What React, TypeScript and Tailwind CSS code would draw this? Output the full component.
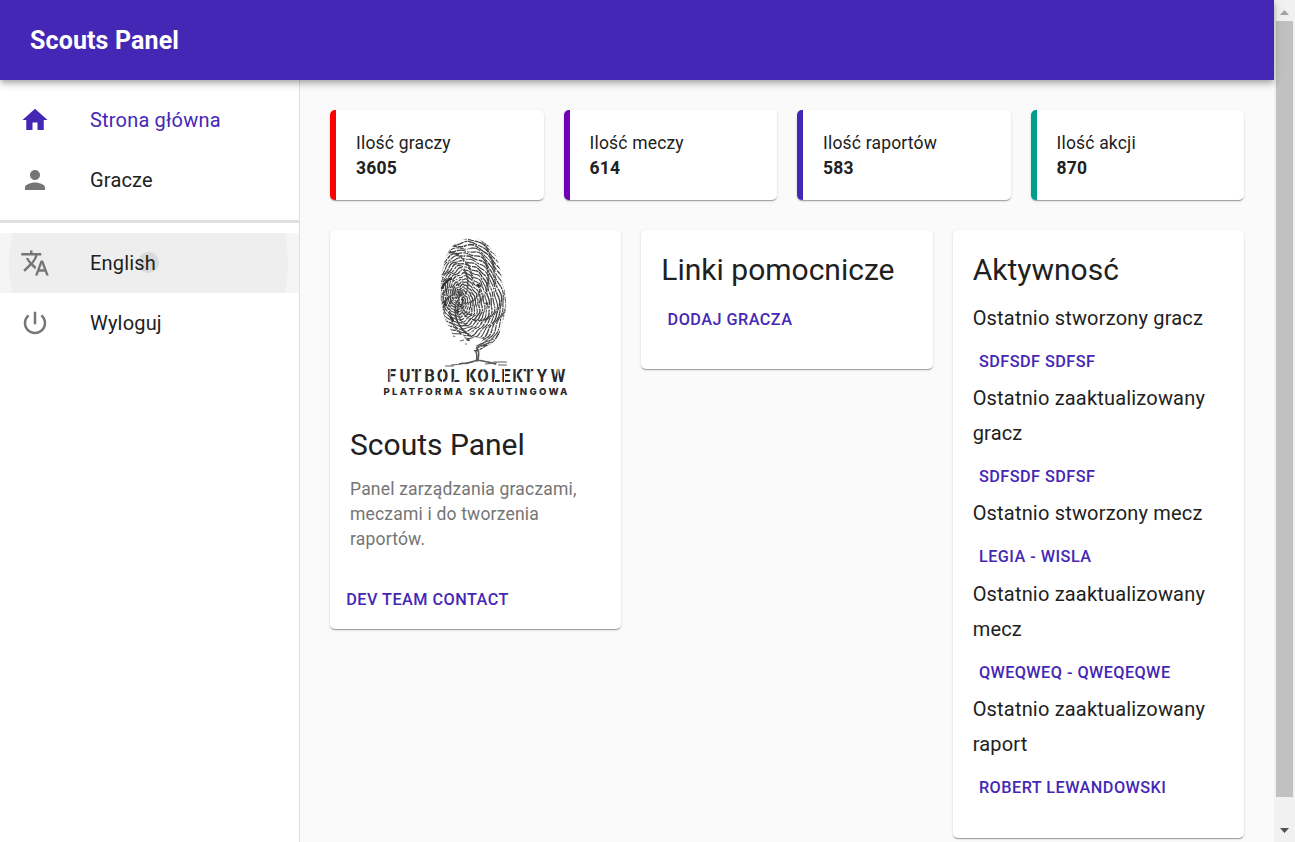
import React from "react";

const HomeIcon = "M10 20v-6h4v6h5v-8h3L12 3 2 12h3v8z";
const PersonIcon = "M12 12c2.21 0 4-1.79 4-4s-1.79-4-4-4-4 1.79-4 4 1.79 4 4 4zm0 2c-2.67 0-8 1.34-8 4v2h16v-2c0-2.66-5.33-4-8-4z";
const TranslateIcon = "M12.87 15.07l-2.54-2.51.03-.03c1.74-1.94 2.98-4.17 3.71-6.53H17V4h-7V2H8v2H1v1.99h11.17C11.5 7.92 10.44 9.75 9 11.35 8.07 10.32 7.3 9.19 6.69 8h-2c.73 1.63 1.73 3.17 2.98 4.56l-5.09 5.02L4 19l5-5 3.11 3.11.76-2.04zM18.5 10h-2L12 22h2l1.12-3h4.75L21 22h2l-4.5-12zm-2.62 7l1.62-4.33L19.12 17h-3.24z";
const PowerIcon = "M13 3h-2v10h2V3zm4.83 2.17l-1.42 1.42C17.99 7.86 19 9.81 19 12c0 3.87-3.13 7-7 7s-7-3.13-7-7c0-2.19 1.01-4.14 2.58-5.42L6.17 5.17C4.23 6.82 3 9.26 3 12c0 4.97 4.03 9 9 9s9-4.03 9-9c0-2.74-1.23-5.18-3.17-6.83z";

function NavItem({ icon, label, active, pressed }: { icon: string; label: string; active?: boolean; pressed?: boolean }) {
  return (
    <a className={`relative flex h-[60px] items-center overflow-hidden px-5 ${active ? "text-[#4527b5]" : "text-[#757575]"} ${pressed ? "bg-[#f5f5f5]" : ""}`}>
      {pressed && <span className="absolute top-[-109px] left-[9px] h-[278px] w-[279px] rounded-full bg-[#eeeeee]" />}
      {pressed && <span className="absolute top-[19px] left-[138px] size-[21px] rounded-full bg-[#d9d9d9]" />}
      <svg viewBox="0 0 24 24" className="relative size-[30px]" fill="currentColor"><path d={icon} /></svg>
      <span className={`relative ml-10 text-[20px] leading-[30px] tracking-[0.00938em] ${active ? "" : "text-[#212121]"}`}>{label}</span>
    </a>
  );
}

const shadow = "shadow-[0_2px_1px_-1px_rgba(0,0,0,0.2),0_1px_1px_0_rgba(0,0,0,0.14),0_1px_3px_0_rgba(0,0,0,0.12)]";

function StatCard({ label, value, border }: { label: string; value: string; border: string }) {
  return (
    <div className={`h-[90px] rounded-[5px] border-l-[6px] bg-white pt-[21px] pl-5 text-[17.5px] leading-[25px] ${border} ${shadow}`}>
      <p className="tracking-[0.01071em]">{label}</p>
      <p className="font-bold tracking-[0.01071em]">{value}</p>
    </div>
  );
}

function TextButton({ children }: { children: string }) {
  return <button className="block px-[6.25px] py-[5px] text-[16.25px] leading-[28.2px] font-medium tracking-[0.02857em] whitespace-nowrap text-[#4527b5] uppercase">{children}</button>;
}

function ridges() {
  const out: { d: string; dash: string; w: number }[] = [];
  for (let i = 1; i <= 36; i++) {
    const rx = i * 1.9;
    const ry = 3 + i * 2.35;
    const cx = 91 + i * 0.3;
    const cy = 70 - i * 0.15;
    let d = "";
    for (let s = 0; s <= 120; s++) {
      const a = (s / 120) * Math.PI * 2;
      const wob = 1 + (0.7 * Math.sin(a * 6 + i * 0.4) + 0.4 * Math.sin(a * 13 + i * 1.5)) / (i + 3);
      const x = cx + Math.cos(a) * rx * wob + Math.sin(a) * rx * 0.12;
      const y = cy + Math.sin(a) * ry * wob;
      d += `${s ? "L" : "M"}${x.toFixed(1)} ${y.toFixed(1)}`;
    }
    out.push({
      d,
      dash: `${5 + ((i * 5) % 9)} .8 ${2 + ((i * 3) % 5)} .6 ${8 + ((i * 7) % 8)} 1.1 ${3 + (i % 4)} .6`,
      w: 1.05 + ((i * 7) % 4) * 0.13,
    });
  }
  return out;
}

const letterCenters = [22, 35.5, 47, 60, 73, 85.5, 91.5, 101.5, 113.5, 126, 136.5, 148, 159, 172.5, 188.5];

function Logo() {
  return (
    <svg viewBox="1.5 0 210 175" className="mx-auto block h-[175px] w-[210px]">
      <defs>
        <clipPath id="print">
          <path d="M99 8C111 7 121 15 126 25C130 33 132 45 134 58Q137 63 137 72C137 83 133 91 131 99C130 106 127 112 117 116L109 122L104 121L114 109L105 107L98 112L93 104L84 107L80 97C75 91 73 80 71 68C71 55 72 39 76 28C80 17 87 10 99 8Z" />
        </clipPath>
      </defs>
      <g clipPath="url(#print)" fill="none" stroke="#444444">
        {ridges().map((r, i) => <path key={i} d={r.d} strokeDasharray={r.dash} strokeWidth={r.w} />)}
        <path d="M99 8C111 7 121 15 126 25C130 33 132 45 134 58Q137 63 137 72C137 83 133 91 131 99M80 97C75 91 73 80 71 68C71 55 72 39 76 28C80 17 87 10 99 8" stroke="white" strokeWidth="1.6" strokeDasharray="1.4 1.6 2.3 1.2" />
        <path d="M98 12Q97 26 94 37T82 54M111 57L116 65M122 61L131 57M118 80L124 76M100 104L112 96" stroke="white" strokeWidth="1.1" strokeDasharray="4 1 6 .7" />
        <path d="M72 59Q75 52 82 48M74 71L77 76M92 69l2 2M87 80l2 2M81 87l3 4M108 54l2 3M116 73l2 1" stroke="#303030" strokeWidth="2.1" />
      </g>
      <g fill="none" stroke="#5a5a5a" strokeLinecap="round">
        <path d="M124 109Q115 112 107 116M123 112Q113 114 107 119" strokeWidth="1.1" />
        <path d="M107 118Q111 122 108 131M106 121Q108 124 107 130" strokeWidth="1.5" />
        <path d="M109 130Q100 133 90 134M108 130Q119 132 126 134" strokeWidth="1.6" />
        <path d="M76 136h8M82 135Q89 135 93 133M96 134l7-2M116 134l11-1M124 132h13M129 135h8M119 132l7 2" strokeWidth="1" />
        <path d="M91 111l3-1M98 110l2-1M96 114l1 0" strokeWidth="1" />
      </g>
      <g transform="scale(.9 1)">
        <text x={letterCenters.map((x) => x / 0.9).join(" ")} y="152.500" textAnchor="middle" fontFamily="Roboto, sans-serif" fontWeight="700" fontSize="18.5" fill="#2a2a2a">FUTBOL KOLEKTYW</text>
      </g>
      <path d="M20.600 138v15M35.500 149v5M45.300 138v3M48.800 138v3M59.500 138v4M59.500 149v5M73 138v5M73 148v6M84.500 149v5M100.300 138v15M113.500 138v5M113.500 148v6M125 149v5M135 138v15M146.800 138v15M157.300 138v3M160.800 138v3M188.500 138v15" stroke="white" strokeWidth="1" />
      <text x="14" y="165" textLength="184" fontFamily="Inter, sans-serif" fontWeight="800" fontSize="9.6" fill="#2a2a2a">PLATFORMA SKAUTINGOWA</text>
    </svg>
  );
}

const activity = [
  ["Ostatnio stworzony gracz", "sdfsdf sdfsf"],
  ["Ostatnio zaaktualizowany gracz", "sdfsdf sdfsf"],
  ["Ostatnio stworzony mecz", "Legia - Wisla"],
  ["Ostatnio zaaktualizowany mecz", "qweqweq - qweqeqwe"],
  ["Ostatnio zaaktualizowany raport", "Robert Lewandowski"],
];

export default function App() {
  return (
    <div className="flex h-[842px] w-[1295px] overflow-hidden bg-[#fafafa] font-[Roboto,sans-serif] text-[#212121]">
      <div className="flex w-[1274px] flex-col">
        <header className="z-10 flex h-20 shrink-0 items-center bg-[#4527b5] px-[30px] pt-[2px] shadow-[0_2px_5px_-1px_rgba(0,0,0,0.2),0_5px_6px_0_rgba(0,0,0,0.14),0_1px_12px_0_rgba(0,0,0,0.12)]">
          <h1 className="text-[25px] leading-[40px] font-bold tracking-[0.005em] text-white">Scouts Panel</h1>
        </header>
        <div className="flex min-h-0 flex-1">
          <nav className="w-[300px] shrink-0 border-r border-[#e0e0e0] bg-white pt-[10px]">
            <NavItem icon={HomeIcon} label="Strona główna" active />
            <NavItem icon={PersonIcon} label="Gracze" />
            <hr className="mt-[10px] mb-[10px] h-[3px] border-0 bg-[#e0e0e0]" />
            <NavItem icon={TranslateIcon} label="English" pressed />
            <NavItem icon={PowerIcon} label="Wyloguj" />
          </nav>
          <main className="flex-1 p-[30px]">
            <div className="grid grid-cols-4 gap-5">
              <StatCard label="Ilość graczy" value="3605" border="border-[#ff0000]" />
              <StatCard label="Ilość meczy" value="614" border="border-[#7000b5]" />
              <StatCard label="Ilość raportów" value="583" border="border-[#4527b5]" />
              <StatCard label="Ilość akcji" value="870" border="border-[#009e8c]" />
            </div>
            <div className="mt-[30px] grid grid-cols-3 items-start gap-5">
              <section className={`h-[399px] rounded-[5px] bg-white ${shadow}`}>
                <Logo />
                <div className="px-5 pt-5">
                  <h2 className="text-[30px] leading-[40px]">Scouts Panel</h2>
                  <p className="mt-3 text-[17.5px] leading-[25px] tracking-[0.01071em] text-[#757575]">Panel zarządzania graczami, meczami i do tworzenia raportów.</p>
                </div>
                <div className="mt-[29px] pl-[10px]"><TextButton>Dev team contact</TextButton></div>
              </section>
              <section className={`h-[139px] rounded-[5px] bg-white p-5 ${shadow}`}>
                <h2 className="text-[30px] leading-[40px]">Linki pomocnicze</h2>
                <div className="mt-[11px]"><TextButton>Dodaj gracza</TextButton></div>
              </section>
              <section className={`h-[608px] rounded-[5px] bg-white p-5 ${shadow}`}>
                <h2 className="mb-[11px] text-[30px] leading-[40px]">Aktywnosć</h2>
                {activity.map(([label, value]) => (
                  <div key={label}>
                    <p className="text-[20px] leading-[35px] tracking-[0.00938em]">{label}</p>
                    <div className="pt-[7px]"><TextButton>{value}</TextButton></div>
                  </div>
                ))}
              </section>
            </div>
          </main>
        </div>
      </div>
      <div className="flex w-[21px] flex-col items-center bg-[#f1f1f1]">
        <div className="flex h-[21px] items-center pt-[3px]"><svg viewBox="0 0 9 5" className="h-[5px] w-[9px]"><path d="M0 5L4.500 0L9 5z" fill="#a3a3a3" /></svg></div>
        <div className="h-[776px] w-[17px] bg-[#c1c1c1]" />
        <div className="mt-auto flex h-[21px] items-center pb-[2px]"><svg viewBox="0 0 9 5" className="h-[5px] w-[9px]"><path d="M0 0L4.500 5L9 0z" fill="#505050" /></svg></div>
      </div>
    </div>
  );
}
